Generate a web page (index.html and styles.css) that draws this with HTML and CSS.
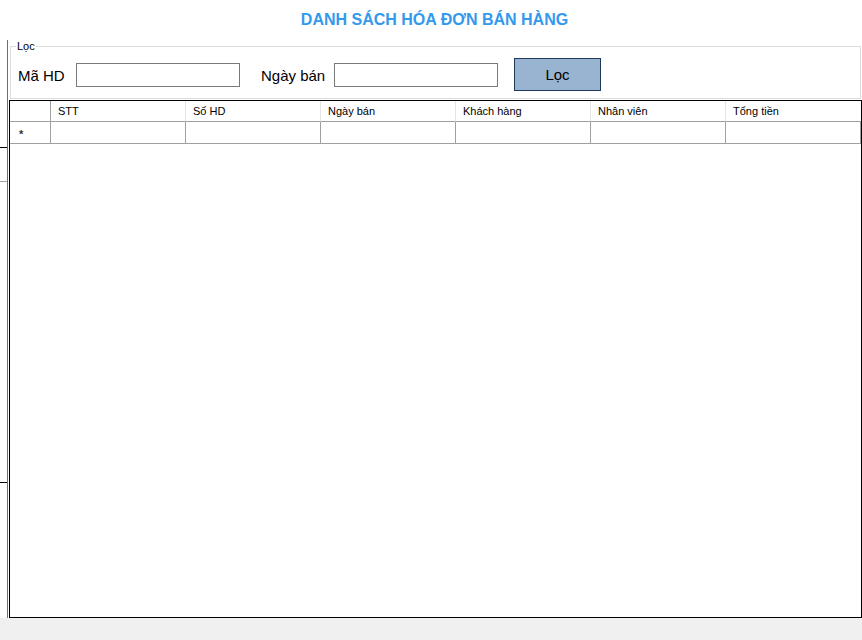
FILE: index.html
```html
<!DOCTYPE html>
<html lang="vi">
<head>
<meta charset="utf-8">
<title>Danh sách hóa đơn bán hàng</title>
<link rel="stylesheet" href="styles.css">
</head>
<body>
<div class="app">
  <div class="title">DANH SÁCH HÓA ĐƠN BÁN HÀNG</div>
  <div class="main">
    <div class="side">
      <div class="side-a"></div>
      <div class="side-b"></div>
      <div class="side-c"></div>
      <div class="side-d"></div>
    </div>
    <div class="content">
      <fieldset class="filter">
        <legend class="filter-legend">Lọc</legend>
        <div class="filter-row">
          <label class="lbl lbl-ma">Mã HD</label>
          <input class="txt" type="text">
          <label class="lbl lbl-ngay">Ngày bán</label>
          <input class="txt" type="text">
          <button class="btn" type="button">Lọc</button>
        </div>
      </fieldset>
      <div class="grid">
        <table class="tbl">
          <thead>
            <tr>
              <th class="rh"></th>
              <th>STT</th>
              <th>Số HD</th>
              <th>Ngày bán</th>
              <th>Khách hàng</th>
              <th>Nhân viên</th>
              <th>Tổng tiền</th>
            </tr>
          </thead>
          <tbody>
            <tr>
              <td class="rh star">*</td>
              <td></td><td></td><td></td><td></td><td></td><td></td>
            </tr>
          </tbody>
        </table>
      </div>
    </div>
  </div>
  <div class="status"></div>
</div>
</body>
</html>
```

FILE: styles.css
```css
* { box-sizing: border-box; }
html, body { margin: 0; padding: 0; background: #ffffff; }
body { font-family: "Liberation Sans", Arial, sans-serif; color: #000; }

.app {
  width: 862px;
  height: 640px;
  display: flex;
  flex-direction: column;
  overflow: hidden;
}

.title {
  height: 40px;
  line-height: 40px;
  text-align: center;
  padding-left: 7px;
  font-size: 16px;
  font-weight: bold;
  color: #3399ee;
  flex: none;
}

.main {
  flex: 1;
  display: flex;
  min-height: 0;
}

.side {
  width: 8px;
  margin-right: 1px;
  border-right: 1px solid #6e6e6e;
  display: flex;
  flex-direction: column;
  flex: none;
}
.side-a { height: 108px; border-bottom: 1px solid #000; }
.side-b { height: 34px; border-bottom: 1px solid #a0a0a0; }
.side-c { height: 301px; border-bottom: 1px solid #000; }
.side-d { flex: 1; }

.content {
  flex: 1;
  display: flex;
  flex-direction: column;
  min-width: 0;
}

.filter {
  margin: 0 1px 0 1px;
  padding: 6px 0 7px 7px;
  border: 1px solid #dcdcdc;
  min-width: 0;
  flex: none;
}
.filter-legend {
  font-size: 11px;
  line-height: 12px;
  padding: 0 1px;
  margin-left: -2px;
}
.filter-row {
  display: flex;
  align-items: center;
  height: 33px;
}
.lbl {
  font-size: 15px;
  line-height: 18px;
  padding-top: 2px;
}
.lbl-ma { width: 58px; }
.lbl-ngay { width: 73px; margin-left: 21px; }
.txt {
  width: 164px;
  height: 24px;
  margin: 0;
  padding: 0 3px;
  border: 1px solid #7a7a7a;
  background: #fff;
  font: 15px "Liberation Sans", Arial, sans-serif;
  outline: none;
}
.btn {
  width: 87px;
  height: 33px;
  margin-left: 16px;
  padding: 0;
  background: #99b4d1;
  border: 1px solid #1f3a5c;
  font: 15px "Liberation Sans", Arial, sans-serif;
  color: #000;
}

.grid {
  margin-top: 1px;
  flex: 1;
  border: 1px solid #000;
  background: #fff;
  overflow: hidden;
}
.tbl {
  border-collapse: separate;
  border-spacing: 0;
  table-layout: fixed;
  width: 851px;
  font-size: 11px;
}
.tbl th, .tbl td {
  width: 135px;
  padding: 0 0 0 7px;
  text-align: left;
  font-weight: normal;
  white-space: nowrap;
  overflow: hidden;
}
.tbl th {
  height: 21px;
  line-height: 20px;
  border-right: 1px solid #e3e3e3;
  border-bottom: 1px solid #a0a0a0;
  padding-top: 0;
}
.tbl th:last-child { border-right: none; }
.tbl td {
  height: 22px;
  border-right: 1px solid #a0a0a0;
  border-bottom: 1px solid #a0a0a0;
}
.tbl .rh {
  width: 41px;
  border-right: 1px solid #a0a0a0;
}
.tbl .star {
  padding-left: 9px;
  padding-top: 3px;
  font-size: 11px;
  font-weight: bold;
  color: #333;
}

.status {
  height: 22px;
  background: #f0f0f0;
  flex: none;
}
```
